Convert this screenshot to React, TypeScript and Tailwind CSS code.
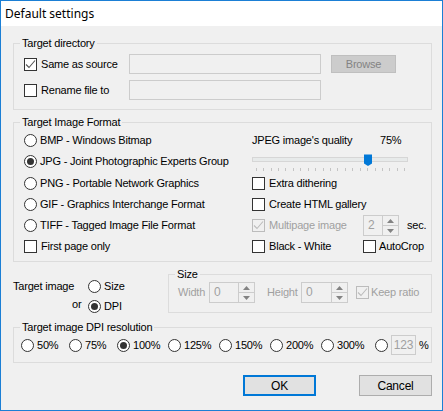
import React from "react";

const Check = ({ checked = false, disabled = false }: { checked?: boolean; disabled?: boolean }) => (
  <span
    className={
      "w-[13px] h-[13px] border shrink-0 flex items-center justify-center " +
      (disabled ? "border-[#bcbcbc] bg-[#f0f0f0]" : "border-[#333333] bg-white")
    }
  >
    {checked && (
      <svg width="11" height="11" viewBox="0 0 11 11">
        <path d="M1 5.5 L4 8.5 L10 1.5" fill="none" stroke={disabled ? "#bcbcbc" : "#555555"} strokeWidth="1.1" />
      </svg>
    )}
  </span>
);

const Radio = ({ checked = false }: { checked?: boolean }) => (
  <span className="w-[13px] h-[13px] rounded-full border border-[#333333] bg-white shrink-0 flex items-center justify-center">
    {checked && <span className="w-[7px] h-[7px] rounded-full bg-[#333333]" />}
  </span>
);

const Spin = ({ value, className }: { value: string; className: string }) => (
  <div className={"flex h-[21px] border border-[#cccccc] bg-[#f0f0f0] " + className}>
    <span className="flex-1 pl-[4px] leading-[19px] text-[#a0a0a0] text-[12px]">{value}</span>
    <div className="w-[16px] border-l border-[#cccccc] flex flex-col">
      <div className="flex-1 flex items-center justify-center border-b border-[#cccccc]">
        <svg width="7" height="4" viewBox="0 0 7 4">
          <path d="M0 4 L3.5 0 L7 4 Z" fill="#838383" />
        </svg>
      </div>
      <div className="flex-1 flex items-center justify-center">
        <svg width="7" height="4" viewBox="0 0 7 4">
          <path d="M0 0 L3.5 4 L7 0 Z" fill="#838383" />
        </svg>
      </div>
    </div>
  </div>
);

const Group = ({ title, className = "", children }: { title: string; className?: string; children: React.ReactNode }) => (
  <fieldset className={"border border-[#dcdcdc] " + className}>
    <legend className="ml-[6px] px-[2px] leading-[13px]">{title}</legend>
    {children}
  </fieldset>
);

const Slider = () => {
  const ticks = Array.from({ length: 21 }, (_, i) => 3.7 + i * 7.43);
  return (
    <svg width="160" height="21" viewBox="0 0 160 21" className="block">
      <rect x="0.5" y="6.5" width="155" height="4" fill="#e7eaea" stroke="#d6d6d6" />
      {ticks.map((x, i) => (
        <line key={i} x1={Math.round(x) + 0.5} y1="17" x2={Math.round(x) + 0.5} y2="20" stroke="#c4c4c4" />
      ))}
      <path d="M112 3.5 H120 V12.5 L116 15 L112 12.5 Z" fill="#0078d7" />
    </svg>
  );
};

const formats = [
  ["BMP - Windows Bitmap", false],
  ["JPG - Joint Photographic Experts Group", true],
  ["PNG - Portable Network Graphics", false],
  ["GIF - Graphics Interchange Format", false],
  ["TIFF - Tagged Image File Format", false],
] as const;

const dpis: [string, string, boolean][] = [
  ["50%", "w-[48px]", false],
  ["75%", "w-[48px]", false],
  ["100%", "w-[51px]", true],
  ["125%", "w-[51px]", false],
  ["150%", "w-[51px]", false],
  ["200%", "w-[51px]", false],
  ["300%", "w-[54px]", false],
];

const rowH = ["h-[21px]", "h-[21px]", "h-[22px]", "h-[21px]", "h-[21px]", "h-[21px]"];

export default function App() {
  return (
    <div className="w-[443px] h-[411px] border border-[#1b7fd5] bg-[#f0f0f0] flex flex-col font-['Liberation_Sans',Arial,sans-serif] text-[11px] tracking-[-0.2px] text-black overflow-hidden">
      <div className="h-[25px] bg-white flex items-center pl-[4px] text-[12px] tracking-normal font-['Noto_Sans','Liberation_Sans',sans-serif]">
        Default settings
      </div>

      <div className="pl-[12px] pr-[10px] flex flex-col">
        {/* Target directory */}
        <Group title="Target directory" className="mt-[11px] pt-[4px] pb-[9px]">
          <div className="flex flex-col gap-[6px] pl-[10px]">
            <div className="flex items-center h-[20px]">
              <label className="w-[105px] flex items-center gap-[4px]">
                <Check checked />
                <span>Same as source</span>
              </label>
              <div className="w-[192px] h-[20px] border border-[#cccccc] bg-[#f0f0f0]" />
              <button className="ml-[10px] w-[65px] h-[18px] bg-[#cccccc] border border-[#bfbfbf] text-[#838383]">
                Browse
              </button>
            </div>
            <div className="flex items-center h-[20px]">
              <label className="w-[105px] flex items-center gap-[4px]">
                <Check />
                <span>Rename file to</span>
              </label>
              <div className="w-[192px] h-[20px] border border-[#cccccc] bg-[#f0f0f0]" />
            </div>
          </div>
        </Group>

        {/* Target Image Format */}
        <Group title="Target Image Format" className="mt-[6px] pt-[1px] pb-[4px]">
          <div className="flex pl-[10px]">
            <div className="w-[228px] flex flex-col">
              {formats.map(([label, checked], i) => (
                <div key={label} className={rowH[i] + " flex items-center gap-[3px]"}>
                  <Radio checked={checked} />
                  <span>{label}</span>
                </div>
              ))}
              <div className={rowH[5] + " flex items-center gap-[4px]"}>
                <Check />
                <span>First page only</span>
              </div>
            </div>
            <div className="flex flex-col">
              <div className={rowH[0] + " flex items-center"}>
                <span className="w-[128px]">JPEG image's quality</span>
                <span>75%</span>
              </div>
              <div className={rowH[1]}>
                <Slider />
              </div>
              <div className={rowH[2] + " flex items-center gap-[4px]"}>
                <Check />
                <span>Extra dithering</span>
              </div>
              <div className={rowH[3] + " flex items-center gap-[4px]"}>
                <Check />
                <span>Create HTML gallery</span>
              </div>
              <div className={rowH[4] + " flex items-center"}>
                <div className="w-[111px] flex items-center gap-[4px]">
                  <Check checked disabled />
                  <span className="text-[#a0a0a0]">Multipage image</span>
                </div>
                <Spin value="2" className="w-[36px] h-[20px]" />
                <span className="ml-[8px]">sec.</span>
              </div>
              <div className={rowH[5] + " flex items-center"}>
                <div className="w-[111px] flex items-center gap-[4px]">
                  <Check />
                  <span>Black - White</span>
                </div>
                <div className="flex items-center gap-[3px]">
                  <Check />
                  <span>AutoCrop</span>
                </div>
              </div>
            </div>
          </div>
        </Group>

        {/* Target image size / dpi */}
        <div className="mt-[6px] flex">
          <div className="w-[155px] pt-[11px] flex flex-col">
            <div className="h-[14px] flex items-center">
              <span className="w-[75px]">Target image</span>
              <Radio />
              <span className="ml-[3px]">Size</span>
            </div>
            <div className="mt-[6px] h-[14px] flex items-center">
              <span className="w-[75px] pl-[59px] mb-[4px]">or</span>
              <Radio checked />
              <span className="ml-[3px]">DPI</span>
            </div>
          </div>
          <Group title="Size" className="flex-1 pt-[1px] pb-[7px]">
            <div className="flex items-center pl-[9px] text-[#a0a0a0]">
              <span className="w-[31px]">Width</span>
              <Spin value="0" className="w-[46px]" />
              <span className="ml-[12px] w-[34px]">Height</span>
              <Spin value="0" className="w-[47px]" />
              <div className="ml-[8px] flex items-center gap-[2px]">
                <Check checked disabled />
                <span>Keep ratio</span>
              </div>
            </div>
          </Group>
        </div>

        {/* DPI resolution */}
        <Group title="Target image DPI resolution" className="mt-[8px] pt-[1px] pb-[7px]">
          <div className="flex items-center h-[20px] pl-[7px]">
            {dpis.map(([label, w, checked]) => (
              <div key={label} className={w + " flex items-center gap-[3px]"}>
                <Radio checked={checked} />
                <span>{label}</span>
              </div>
            ))}
            <Radio />
            <div className="ml-[3px] w-[25px] h-[20px] border border-[#cccccc] bg-[#f0f0f0] text-[#a0a0a0] text-[12px] leading-[18px] text-center">
              123
            </div>
            <span className="ml-[3px]">%</span>
          </div>
        </Group>

        {/* Buttons */}
        <div className="mt-[12px] flex justify-end gap-[43px]">
          <button className="w-[73px] h-[21px] bg-[#e1e1e1] border-2 border-[#0078d7] text-[12px]">OK</button>
          <button className="w-[73px] h-[21px] bg-[#e1e1e1] border border-[#adadad] text-[12px]">Cancel</button>
        </div>
      </div>
    </div>
  );
}
